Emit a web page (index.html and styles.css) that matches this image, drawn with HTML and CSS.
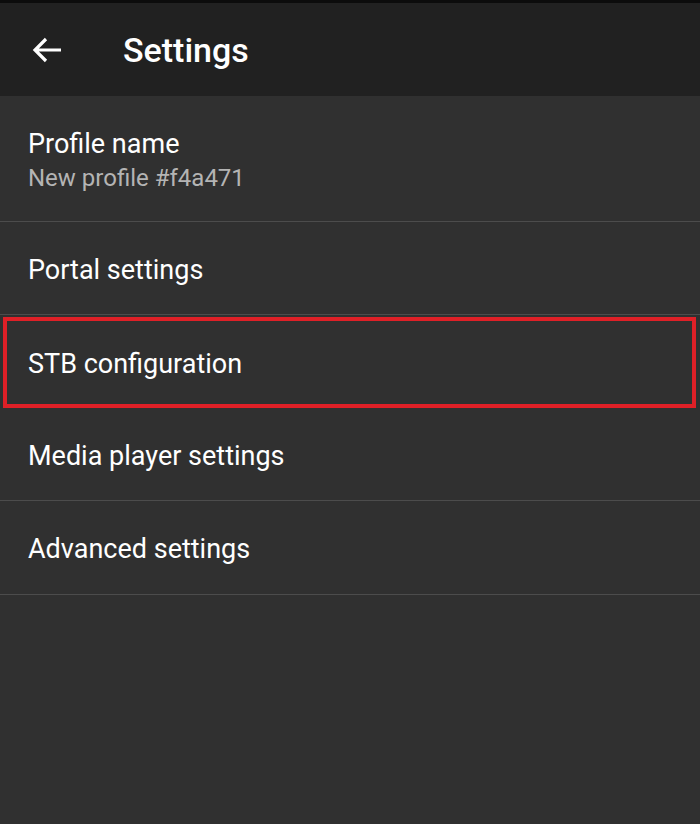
FILE: index.html
```html
<!DOCTYPE html>
<html lang="en">
<head>
    <meta charset="UTF-8">
    <meta name="viewport" content="width=device-width, initial-scale=1.0">
    <title>Settings</title>
    <link rel="stylesheet" href="styles.css">
</head>
<body>
    <div class="toolbar">
        <svg class="back" width="32" height="28" viewBox="0 0 32 28">
            <path d="M30 14H4M15 3L4 14l11 11" fill="none" stroke="#fff" stroke-width="3.2"/>
        </svg>
        <h1>Settings</h1>
    </div>
    <div class="list">
        <div class="item tall">
            <div class="title">Profile name</div>
            <div class="summary">New profile #f4a471</div>
        </div>
        <div class="item">
            <div class="title">Portal settings</div>
        </div>
        <div class="item marked">
            <div class="title">STB configuration</div>
        </div>
        <div class="item">
            <div class="title">Media player settings</div>
        </div>
        <div class="item last">
            <div class="title">Advanced settings</div>
        </div>
    </div>
</body>
</html>
```

FILE: styles.css
```css
body {
    margin: 0;
    padding: 0;
    background-color: #303030;
    font-family: Roboto, "Noto Sans", sans-serif;
    color: #fff;
    height: 824px;
    overflow: hidden;
}
.toolbar {
    height: 93px;
    border-top: 3px solid #0c0c0c;
    background-color: #212121;
    display: flex;
    align-items: center;
}
.back {
    margin-left: 31px;
    margin-right: 60px;
}
.toolbar h1 {
    margin: 0;
    font-size: 34px;
    font-weight: 500;
}
.item {
    height: 93px;
    padding: 3px 28px 0;
    border-bottom: 1px solid #4c4c4c;
    display: flex;
    flex-direction: column;
    justify-content: center;
    box-sizing: border-box;
}
.item.tall {
    height: 126px;
    padding-top: 2px;
}
.item.last {
    height: 94px;
}
.title {
    font-size: 27px;
}
.summary {
    font-size: 24px;
    color: #b4b4b4;
    margin-top: 4px;
}
.marked {
    margin: 2px 4px 0 3px;
    height: 91px;
    padding-left: 21px;
    border: 4px solid #df2027;
}
```
